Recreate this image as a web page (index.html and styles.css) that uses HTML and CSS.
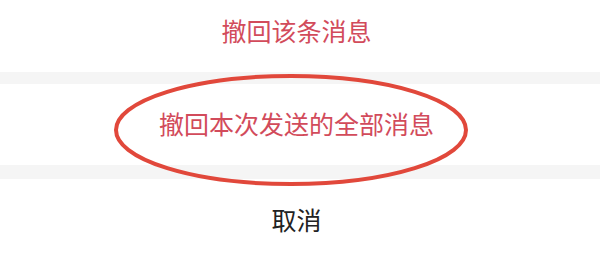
FILE: index.html
```html
<!DOCTYPE html>
<html lang="zh-CN">
<head>
<meta charset="utf-8">
<title>撤回消息</title>
<link rel="stylesheet" href="styles.css">
</head>
<body>
<div class="sheet">
  <div class="row row-first"><span class="label danger">撤回该条消息</span></div>
  <div class="band"></div>
  <div class="row row-second"><span class="label danger">撤回本次发送的全部消息</span></div>
  <div class="band band-thick"></div>
  <div class="row row-cancel"><span class="label">取消</span></div>
  <svg class="mark" width="600" height="274" viewBox="0 0 600 274" aria-hidden="true">
    <ellipse cx="291" cy="130" rx="175" ry="54" fill="none" stroke="#e1483b" stroke-width="4"/>
  </svg>
</div>
</body>
</html>
```
FILE: styles.css
```css
html, body {
  margin: 0;
  padding: 0;
  background: #ffffff;
}
.sheet {
  position: relative;
  width: 600px;
  height: 274px;
  overflow: hidden;
  display: flex;
  flex-direction: column;
  font-family: "Noto Sans CJK SC", "Noto Sans", sans-serif;
}
.row {
  display: flex;
  align-items: center;
  justify-content: center;
  padding-right: 7px;
  background: #ffffff;
}
.label {
  font-size: 25px;
  line-height: 1;
  color: #222222;
  margin-top: -2px;
}
.danger {
  color: #d24b5b;
}
.row-first {
  height: 62px;
  padding-bottom: 10px;
}
.row-second {
  height: 81px;
}
.row-cancel {
  height: 82px;
}
.band {
  height: 12px;
  background: #f5f5f5;
}
.band-thick {
  height: 14px;
}
.mark {
  position: absolute;
  left: 0;
  top: 0;
  pointer-events: none;
}
```
